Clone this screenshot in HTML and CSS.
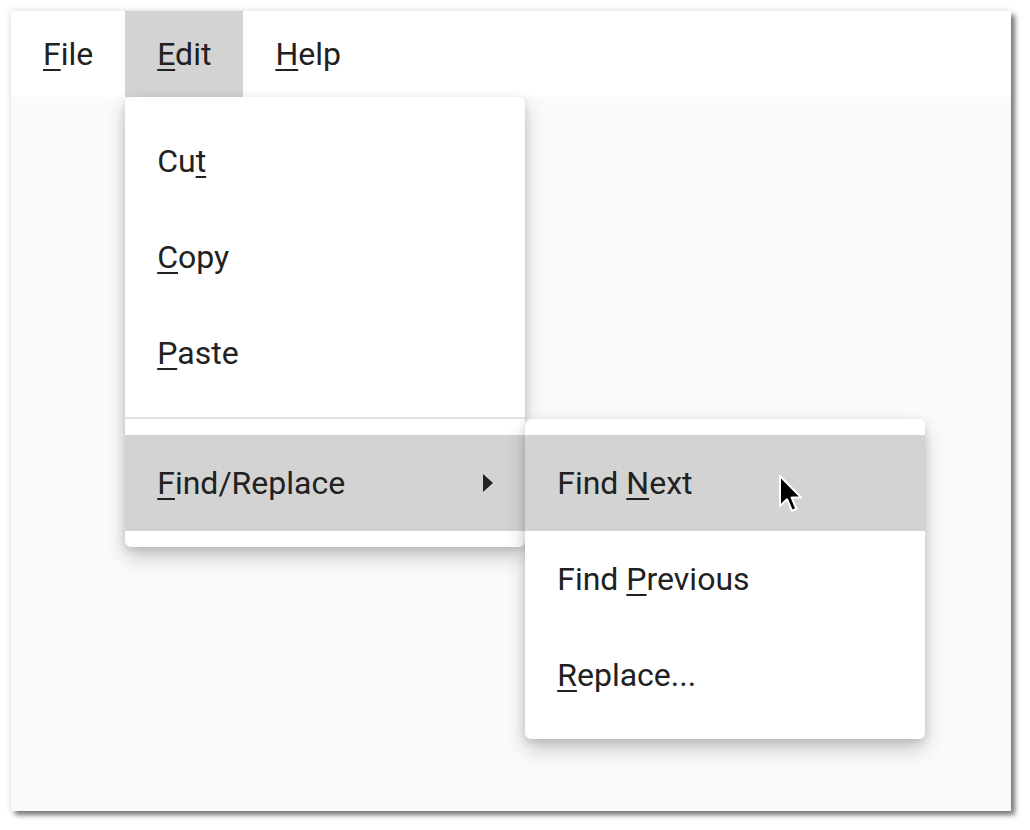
FILE: index.html
```html
<!DOCTYPE html>
<html lang="en">
<head>
    <meta charset="UTF-8">
    <meta name="viewport" content="width=device-width, initial-scale=1.0">
    <title>Menu Demo</title>
    <link rel="stylesheet" href="styles.css">
</head>
<body>

<div class="window">
    <div class="menubar">
        <div class="menubar-item"><u>F</u>ile</div>
        <div class="menubar-item open">
            <u>E</u>dit
            <!-- Edit dropdown -->
            <div class="menu">
                <div class="menu-item"><span>Cu<u>t</u></span></div>
                <div class="menu-item"><span><u>C</u>opy</span></div>
                <div class="menu-item"><span><u>P</u>aste</span></div>
                <div class="separator"></div>
                <div class="menu-item active has-sub">
                    <span><u>F</u>ind/Replace</span>
                    <span class="arrow"></span>
                    <!-- Find/Replace submenu -->
                    <div class="menu submenu">
                        <div class="menu-item active"><span>Find <u>N</u>ext</span></div>
                        <div class="menu-item"><span>Find <u>P</u>revious</span></div>
                        <div class="menu-item"><span><u>R</u>eplace...</span></div>
                    </div>
                </div>
            </div>
        </div>
        <div class="menubar-item"><u>H</u>elp</div>
    </div>
    <div class="content"></div>

    <svg class="cursor" width="26" height="40" viewBox="0 0 13 20">
        <path d="M1 1 L1 16 L4.5 12.6 L7 18.4 L9.2 17.5 L6.8 11.8 L11.6 11.8 Z"
              fill="#000" stroke="#fff" stroke-width="1" stroke-linejoin="round"/>
    </svg>
</div>

</body>
</html>
```

FILE: styles.css
```css
body {
    margin: 0;
    background: #fff;
    font-family: Roboto, "Liberation Sans", sans-serif;
    color: #212121;
}
u {
    text-decoration-thickness: 2px;
    text-underline-offset: 4px;
}
.window {
    position: relative;
    margin: 11px;
    width: 1000px;
    height: 800px;
    display: flex;
    flex-direction: column;
    background: #fafafa;
    box-shadow: 0 0 8px rgba(0, 0, 0, 0.12), 4px 4px 5px rgba(0, 0, 0, 0.5);
}
.menubar {
    display: flex;
    height: 86px;
    background: #fff;
}
.menubar-item {
    position: relative;
    padding: 0 32px;
    font-size: 32px;
    line-height: 86px;
    cursor: default;
}
.menubar-item.open {
    background: #d3d3d3;
}
.content {
    flex: 1;
}
/* Dropdown menus */
.menu {
    position: absolute;
    top: 100%;
    left: 0;
    width: 400px;
    padding: 16px 0;
    background: #fff;
    border-radius: 6px;
    box-shadow: 0 10px 20px rgba(0, 0, 0, 0.2), 0 3px 8px rgba(0, 0, 0, 0.12);
    z-index: 5;
}
.menu-item {
    position: relative;
    display: flex;
    justify-content: space-between;
    align-items: center;
    height: 96px;
    padding: 0 32px;
    font-size: 32px;
    line-height: 96px;
}
.menu-item.active {
    background: #d3d3d3;
}
.separator {
    height: 2px;
    margin: 16px 0;
    background: #e2e2e2;
}
.arrow {
    width: 0;
    height: 0;
    border-top: 9px solid transparent;
    border-bottom: 9px solid transparent;
    border-left: 10px solid #212121;
}
.submenu {
    top: -16px;
    left: 100%;
    z-index: 6;
}
.cursor {
    position: absolute;
    left: 767px;
    top: 463px;
    z-index: 10;
}
```
